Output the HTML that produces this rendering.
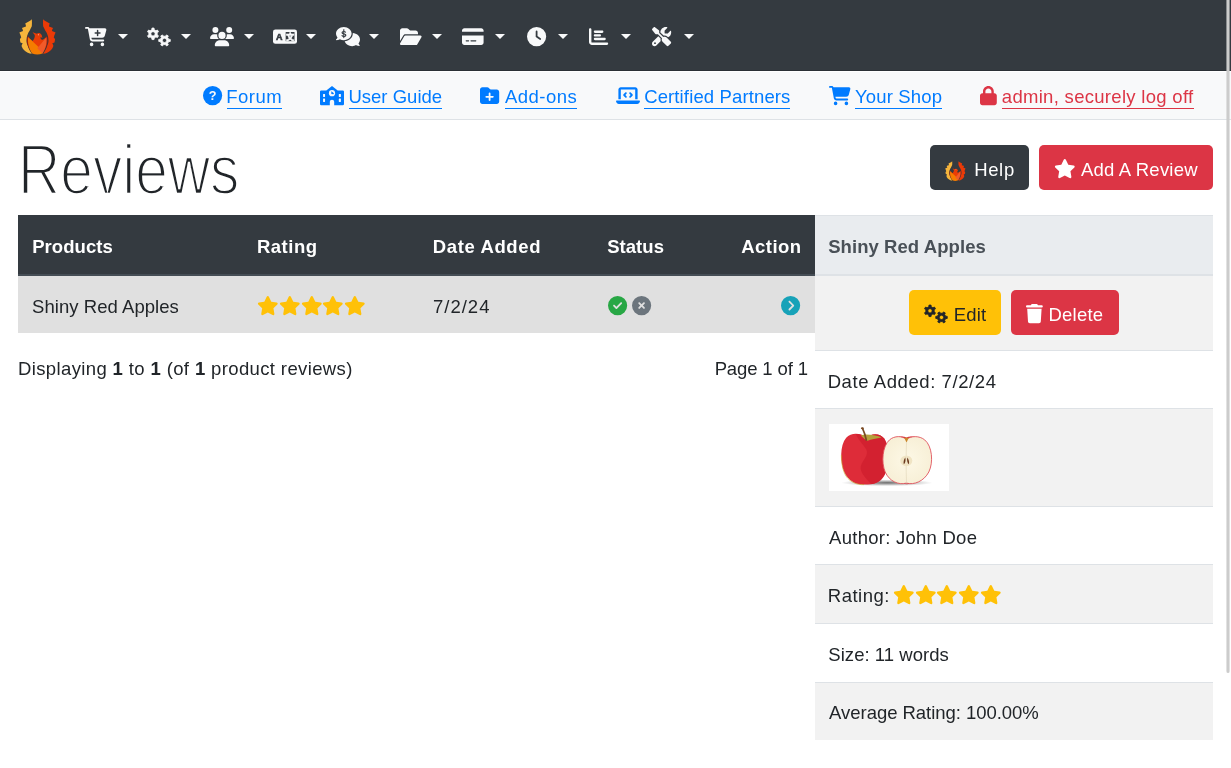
<!DOCTYPE html>
<html lang="en"><head><meta charset="utf-8"><title>Reviews</title>
<style>
html,body{margin:0;padding:0;background:#fff;}
body{width:1231px;height:768px;overflow:hidden;position:relative;font-family:"Liberation Sans",sans-serif;color:#212529;}
.b{position:absolute;box-sizing:border-box;}
.t{position:absolute;white-space:nowrap;line-height:1;text-decoration:none;}
.ul{position:absolute;height:1.2px;display:block;}
svg{position:absolute;overflow:visible;}
.caret{position:absolute;width:0;height:0;border-left:5.1px solid transparent;border-right:5.1px solid transparent;border-top:5.1px solid #f8f9fa;top:34px;}
h1{position:absolute;margin:0;font-weight:400;white-space:nowrap;line-height:1;transform-origin:0 0;}
</style></head><body>
<div id="page" style="position:absolute;left:0;top:0;width:1231px;height:768px;will-change:transform">

<div class="b" style="left:0px;top:0px;width:1231px;height:71px;background:#343a40;border-bottom:1px solid #2b3035;"></div>
<div class="b" style="left:0px;top:71px;width:1231px;height:49px;background:#f8f9fa;border-top:1px solid #fff;border-bottom:1px solid #dee2e6;"></div>
<div class="b" style="left:930px;top:145px;width:99.2px;height:45px;background:#343a40;border-radius:5px;"></div>
<div class="b" style="left:1039.3px;top:145px;width:173.5px;height:45px;background:#dc3545;border-radius:5px;"></div>
<div class="b" style="left:18px;top:215px;width:796.8px;height:60.8px;background:#343a40;"></div>
<div class="b" style="left:18px;top:274.1px;width:796.8px;height:1.7px;background:#454d55;"></div>
<div class="b" style="left:18px;top:275.8px;width:796.8px;height:57px;background:#e0e0e0;"></div>
<div class="b" style="left:814.8px;top:215px;width:398px;height:60.8px;background:#e9ecef;border-top:1px solid #dee2e6;"></div>
<div class="b" style="left:814.8px;top:274.2px;width:398px;height:1.6px;background:#dee2e6;"></div>
<div class="b" style="left:814.8px;top:275.8px;width:398px;height:74.2px;background:#f2f2f2;"></div>
<div class="b" style="left:814.8px;top:350px;width:398px;height:58px;background:#fff;border-top:1px solid #dee2e6;"></div>
<div class="b" style="left:814.8px;top:408px;width:398px;height:98px;background:#f2f2f2;border-top:1px solid #dee2e6;"></div>
<div class="b" style="left:814.8px;top:506px;width:398px;height:58px;background:#fff;border-top:1px solid #dee2e6;"></div>
<div class="b" style="left:814.8px;top:564px;width:398px;height:59px;background:#f2f2f2;border-top:1px solid #dee2e6;"></div>
<div class="b" style="left:814.8px;top:623px;width:398px;height:59px;background:#fff;border-top:1px solid #dee2e6;"></div>
<div class="b" style="left:814.8px;top:682px;width:398px;height:58px;background:#f2f2f2;border-top:1px solid #dee2e6;"></div>
<div class="b" style="left:909px;top:289.9px;width:92.1px;height:45.2px;background:#ffc107;border-radius:5px;"></div>
<div class="b" style="left:1010.8px;top:289.9px;width:108.0px;height:45.2px;background:#dc3545;border-radius:5px;"></div>
<div class="b" style="left:829px;top:424px;width:120px;height:67px;background:#fff;"></div>
<svg style="left:829px;top:424px;" width="120" height="67" viewBox="829 424 120 67" ><defs><radialGradient id="shd" cx="50%" cy="50%" r="50%"><stop offset="0" stop-color="#444" stop-opacity=".8"/><stop offset=".55" stop-color="#777" stop-opacity=".45"/><stop offset="1" stop-color="#999" stop-opacity="0"/></radialGradient><radialGradient id="half" cx="50%" cy="50%" r="55%"><stop offset="0" stop-color="#fdf8e6"/><stop offset="1" stop-color="#f7efd6"/></radialGradient></defs><ellipse cx="887" cy="482.800" rx="46" ry="3.400" fill="url(#shd)"/><path fill="#de2c39" d="M866.300 438.100C861.500 432.800 851.200 432.100 846.200 437.800C839.600 445.300 840.300 463.100 844.400 472.300C848.100 480.500 856 485.400 865.600 484.500C875.200 485.400 883 480.500 885.700 472.300C889.800 462.400 889.100 446 884.300 438.500C879.300 432.100 870.400 433.400 866.300 438.100Z"/><path fill="#cf1f2e" opacity=".8" d="M856 434C857.400 439.200 862.900 444 866.300 449.400C869 454.900 862.900 459.700 860.800 465.900C859.400 472 865.600 477.500 871.100 484C877.900 483.600 883.400 479.500 885.700 472.300C889.800 462.400 889.100 446 884.300 438.500C879.300 432.100 870.400 433.400 866.300 438.100C863.500 435.100 860.100 433.700 856 434Z"/><path fill="#b5a03a" d="M860.800 435.400C864.200 434 869.700 434.800 875.200 435.400C878.600 435.900 880.600 436.700 881.500 437.500C876.500 438.400 871.100 439.200 867.600 440.800C864.900 439.200 862.900 437.500 860.800 435.400Z"/><path fill="none" stroke="#7a4a24" stroke-width="1.700" stroke-linecap="round" d="M866.300 440 C865.500 436 864 431.500 862.600 428.600"/><ellipse cx="862.400" cy="428.300" rx="1.500" ry="1" fill="#7a4a24"/><path fill="none" stroke="#c9a02a" stroke-width=".8" opacity=".8" d="M841.400 455 C841.400 464 843 471 846 476 C850 482 857 485 864 484.600"/><path fill="url(#half)" stroke="#e0525c" stroke-width=".9" d="M906.400 439.500C902.500 435.600 894.300 435.600 889.500 439.900C882.400 446 881.100 462.400 885.200 472C889.300 481.200 898.400 485.300 906.400 483.100C914.100 485.300 924 481.200 928.800 472C933.600 462.400 932.200 446 924.700 439.900C919.600 435.600 910.700 435.600 906.400 439.500Z"/><path fill="#d8323c" d="M898 437.300 C901.500 436.500 904.800 437.600 906.400 439.600 C908 437.600 911.500 436.500 915.500 437.300 C912 436.100 909 436.300 906.400 437.400 C904 436.300 901 436.100 898 437.300 Z"/><path fill="#c9862a" d="M904.200 437.700 L908.800 437.700 L906.500 442.600 Z"/><path fill="none" stroke="#e6dcc0" stroke-width=".8" d="M906.500 442 C906 455 906 470 906.500 482.500"/><ellipse cx="906.300" cy="460.800" rx="6" ry="5.400" fill="#f0e4c4"/><path fill="#6b3a1e" d="M905.300 457.600 C903.800 459.500 903.200 462.300 903.800 464.200 C905.300 463.400 906 460.500 905.300 457.600 Z M907.300 457.600 C908.800 459.500 909.500 462.300 908.900 464.200 C907.400 463.400 906.700 460.500 907.300 457.600 Z"/><path fill="#d8323c" d="M903 483.300 C905 484.600 908.500 484.600 910.500 483.300 C908.500 484 905.500 484 903 483.300 Z"/></svg>
<h1 id="h1" style="left:18.3px;top:134.7px;font-size:70.3px;transform:scaleX(0.8335);-webkit-text-stroke:2.4px #fff;">Reviews</h1>
<a id="t_forum" class="t" style="left:226.18px;top:87.74px;font-size:18.5px;color:#007bff;font-weight:400;letter-spacing:0.509px">Forum</a>
<i class="ul" style="left:227.0px;width:55.0px;top:107.8px;background:#007bff"></i>
<a id="t_guide" class="t" style="left:348.39px;top:87.74px;font-size:18.5px;color:#007bff;font-weight:400;letter-spacing:0.019px">User Guide</a>
<i class="ul" style="left:348.9px;width:93.1px;top:107.8px;background:#007bff"></i>
<a id="t_addons" class="t" style="left:505.04px;top:87.74px;font-size:18.5px;color:#007bff;font-weight:400;letter-spacing:0.474px">Add-ons</a>
<i class="ul" style="left:504.6px;width:72.4px;top:107.8px;background:#007bff"></i>
<a id="t_cert" class="t" style="left:644.15px;top:87.74px;font-size:18.5px;color:#007bff;font-weight:400;letter-spacing:0.133px">Certified Partners</a>
<i class="ul" style="left:644.4px;width:146.1px;top:107.8px;background:#007bff"></i>
<a id="t_shop" class="t" style="left:854.89px;top:87.74px;font-size:18.5px;color:#007bff;font-weight:400;letter-spacing:0.179px">Your Shop</a>
<i class="ul" style="left:854.9px;width:87.2px;top:107.8px;background:#007bff"></i>
<a id="t_admin" class="t" style="left:1001.83px;top:87.74px;font-size:18.5px;color:#dc3545;font-weight:400;letter-spacing:0.299px">admin, securely log off</a>
<i class="ul" style="left:1001.9px;width:192.2px;top:107.8px;background:#dc3545"></i>
<a id="t_help" class="t" style="left:974.16px;top:160.74px;font-size:18.5px;color:#fff;font-weight:400;letter-spacing:0.659px">Help</a>
<a id="t_addrev" class="t" style="left:1080.89px;top:160.74px;font-size:18.5px;color:#fff;font-weight:400;letter-spacing:0.233px">Add A Review</a>
<span id="t_hprod" class="t" style="left:32.20px;top:237.74px;font-size:18.5px;color:#fff;font-weight:700;letter-spacing:0.060px">Products</span>
<span id="t_hrat" class="t" style="left:256.88px;top:237.74px;font-size:18.5px;color:#fff;font-weight:700;letter-spacing:0.536px">Rating</span>
<span id="t_hdate" class="t" style="left:432.75px;top:237.74px;font-size:18.5px;color:#fff;font-weight:700;letter-spacing:0.624px">Date Added</span>
<span id="t_hstat" class="t" style="left:607.15px;top:237.74px;font-size:18.5px;color:#fff;font-weight:700;letter-spacing:0.053px">Status</span>
<span id="t_hact" class="t" style="left:741.32px;top:237.74px;font-size:18.5px;color:#fff;font-weight:700;letter-spacing:0.420px">Action</span>
<span id="t_hright" class="t" style="left:828.15px;top:237.74px;font-size:18.5px;color:#495057;font-weight:700;letter-spacing:0.072px">Shiny Red Apples</span>
<span id="t_rprod" class="t" style="left:32.09px;top:297.74px;font-size:18.5px;color:#212529;font-weight:400;letter-spacing:0.048px">Shiny Red Apples</span>
<span id="t_rdate" class="t" style="left:433.00px;top:297.74px;font-size:18.5px;color:#212529;font-weight:400;letter-spacing:1.000px">7/2/24</span>
<span id="t_disp" class="t" style="left:18.04px;top:359.74px;font-size:18.5px;color:#212529;font-weight:400;letter-spacing:0.370px">Displaying <b>1</b> to <b>1</b> (of <b>1</b> product reviews)</span>
<span id="t_page" class="t" style="left:714.64px;top:359.74px;font-size:18.5px;color:#212529;font-weight:400;letter-spacing:-0.130px">Page 1 of 1</span>
<a id="t_edit" class="t" style="left:953.63px;top:305.74px;font-size:18.5px;color:#212529;font-weight:400;letter-spacing:0.214px">Edit</a>
<a id="t_del" class="t" style="left:1048.40px;top:305.74px;font-size:18.5px;color:#fff;font-weight:400;letter-spacing:0.246px">Delete</a>
<span id="t_pdate" class="t" style="left:827.64px;top:372.74px;font-size:18.5px;color:#212529;font-weight:400;letter-spacing:0.582px">Date Added: 7/2/24</span>
<span id="t_pauth" class="t" style="left:829.12px;top:528.74px;font-size:18.5px;color:#212529;font-weight:400;letter-spacing:0.258px">Author: John Doe</span>
<span id="t_prat" class="t" style="left:827.76px;top:586.74px;font-size:18.5px;color:#212529;font-weight:400;letter-spacing:0.517px">Rating:</span>
<span id="t_psize" class="t" style="left:828.34px;top:645.74px;font-size:18.5px;color:#212529;font-weight:400;letter-spacing:0.041px">Size: 11 words</span>
<span id="t_pavg" class="t" style="left:829.12px;top:703.74px;font-size:18.5px;color:#212529;font-weight:400;letter-spacing:-0.043px">Average Rating: 100.00%</span>
<svg style="left:18.6px;top:19.4px;" width="36.6" height="36.6" viewBox="0 0 100 100" ><path fill="#f6b53c" d="M35 1 C31 6 23 9 17 12 Q19 16 19 20.500 Q13 22 8 24.500 Q10.500 29 11 33 Q5.500 34.500 1 37 Q4.500 44 6 50.500 Q4 52.500 2.500 55 Q3 60 4 64 L10 66 Q7.500 70 7 74 C8.500 78.500 10.500 82 13.500 85 C16.500 88 20 90.500 24 92.300 C27.500 93.800 31.500 94.800 35 95 C29 87 25 79 23.500 72 C21 67 20 61 20.600 56.400 C20.600 52 21.500 48 22.500 44.800 C24 40 26.500 35 29.300 31.200 C31 27 33.500 23 35 19.600 C35.600 13 35.600 7 35 1 Z"/><path fill="#eb3a07" d="M 66 1 C 70 6 78 9 84 12 Q 82 16 82 20.5 Q 88 22 93 24.5 Q 90.5 29 90 33 Q 95.5 34.5 100 37 Q 96.5 44 95 50.5 Q 97 52.5 98.5 55 Q 98 60 97 64 L 91 66 Q 93.5 70 94 74 C 92.5 78.5 90.5 82 87.5 85 C 84.5 88 81 90.5 77 92.3 C 73.5 93.8 69.5 94.8 66 95 C 72 87 76 79 77.5 72 C 80 67 81 61 80.4 56.4 C 80.4 52 79.5 48 78.5 44.8 C 77 40 74.5 35 71.7 31.2 C 70 27 67.5 23 66 19.6 C 65.4 13 65.4 7 66 1 Z"/><path fill="#a3210c" d="M24 47 C19 58 22 76 34 88 L38 86 C28 74 25 60 28 50 Z M76 47 C81 58 78 76 66 88 L62 86 C72 74 75 60 72 50 Z"/><path fill="#e93c06" d="M37 36 L49 40 C53 37 59 38 62 44 L64 52 L59 49 C58 55 62 58 66 56 L75 50 L73 66 L50 80 L27 66 L25 50 L37 60 C41 56 44 50 43 44 Z"/><path fill="#f57c00" d="M25 50 C23 66 27 82 36 94 C45 98 55 98 64 94 L66 88 Z"/><path fill="#f15a29" d="M75 50 C77 66 73 82 64 94 L50 80 Z"/><circle cx="53" cy="43" r="1.500" fill="#f9c7b0"/></svg>
<svg style="left:85.2px;top:27.2px;" width="21.6" height="19.2" viewBox="0 0 576 512" ><path fill="#f8f9fa" fill-rule="nonzero" d="M0 24C0 10.700 10.700 0 24 0H69.500c22 0 41.500 12.800 50.600 32h411c26.300 0 45.500 25 38.600 50.400l-41 152.300c-8.500 31.400-37 53.300-69.500 53.300H170.700l5.400 28.500c2.200 11.300 12.100 19.500 23.600 19.500H488c13.300 0 24 10.700 24 24s-10.700 24-24 24H199.700c-34.600 0-64.300-24.600-70.700-58.500L77.400 54.500c-.700-3.800-4-6.500-7.900-6.500H24C10.700 48 0 37.300 0 24zM128 464a48 48 0 1 1 96 0 48 48 0 1 1 -96 0zm336-48a48 48 0 1 1 0 96 48 48 0 1 1 0-96zM252 160c0 11 9 20 20 20h44v44c0 11 9 20 20 20s20-9 20-20V180h44c11 0 20-9 20-20s-9-20-20-20H356V96c0-11-9-20-20-20s-20 9-20 20v44H272c-11 0-20 9-20 20z"/></svg>
<svg style="left:147px;top:27.2px;" width="24.0" height="19.2" viewBox="0 0 640 512" ><path fill="#f8f9fa" fill-rule="evenodd" stroke="#f8f9fa" stroke-width="22" stroke-linejoin="round" d="M192.95 72.87 L187.63 28.47 L132.37 28.47 L127.05 72.87 L81.96 98.90 L40.85 81.31 L13.22 129.16 L49.01 155.97 L49.01 208.03 L13.22 234.84 L40.85 282.69 L81.96 265.10 L127.05 291.13 L132.37 335.53 L187.63 335.53 L192.95 291.13 L238.04 265.10 L279.15 282.69 L306.78 234.84 L270.99 208.03 L270.99 155.97 L306.78 129.16 L279.15 81.31 L238.04 98.90Z M102.00 182.00a58.00 58.00 0 1 0 116.00 0a58.00 58.00 0 1 0 -116.00 0Z"/><path fill="#f8f9fa" fill-rule="evenodd" stroke="#f8f9fa" stroke-width="22" stroke-linejoin="round" d="M576.13 390.95 L620.53 385.63 L620.53 330.37 L576.13 325.05 L550.10 279.96 L567.69 238.85 L519.84 211.22 L493.03 247.01 L440.97 247.01 L414.16 211.22 L366.31 238.85 L383.90 279.96 L357.87 325.05 L313.47 330.37 L313.47 385.63 L357.87 390.95 L383.90 436.04 L366.31 477.15 L414.16 504.78 L440.97 468.99 L493.03 468.99 L519.84 504.78 L567.69 477.15 L550.10 436.04Z M409.00 358.00a58.00 58.00 0 1 0 116.00 0a58.00 58.00 0 1 0 -116.00 0Z"/></svg>
<svg style="left:209.6px;top:27.2px;" width="24.0" height="19.2" viewBox="0 0 640 512" ><path fill="#f8f9fa" fill-rule="nonzero" d="M144 0a80 80 0 1 1 0 160A80 80 0 1 1 144 0zM512 0a80 80 0 1 1 0 160A80 80 0 1 1 512 0zM0 298.700C0 239.800 47.800 192 106.700 192h42.700c15.900 0 31 3.500 44.600 9.700c-1.300 7.200-1.900 14.700-1.900 22.300c0 38.200 16.800 72.500 43.300 96c-.200 0-.400 0-.700 0H21.300C9.600 320 0 310.400 0 298.700zM405.300 320c-.200 0-.400 0-.700 0c26.600-23.500 43.300-57.800 43.300-96c0-7.600-.700-15-1.900-22.300c13.600-6.300 28.700-9.700 44.600-9.700h42.700C592.200 192 640 239.800 640 298.700c0 11.800-9.600 21.300-21.300 21.300H405.300zM224 224a96 96 0 1 1 192 0 96 96 0 1 1 -192 0zM128 485.300C128 411.700 187.700 352 261.300 352H378.700C452.300 352 512 411.700 512 485.300c0 14.700-11.900 26.700-26.700 26.700H154.700c-14.700 0-26.700-11.900-26.700-26.700z"/></svg>
<svg style="left:272.7px;top:27.2px;" width="24" height="19.2" viewBox="0 0 640 512" ><rect x="0" y="64" width="640" height="384" rx="64" fill="#f8f9fa"/><rect x="338" y="134" width="236" height="244" fill="#343a40"/><text x="166" y="340" font-family="Liberation Sans, sans-serif" font-weight="700" font-size="240" text-anchor="middle" fill="#343a40" stroke="#343a40" stroke-width="16">A</text><text x="456" y="340" font-family="Noto Sans CJK SC, WenQuanYi Zen Hei, sans-serif" font-weight="900" font-size="220" text-anchor="middle" fill="#f8f9fa" stroke="#f8f9fa" stroke-width="12">文</text></svg>
<svg style="left:335.8px;top:27.2px;" width="24" height="19.2" viewBox="0 0 640 512" ><path fill="#f8f9fa" d="M432 512c-95.600 0-176.200-54.600-200.500-129C348.900 372.900 448 288.300 448 176c0-5.200-.200-10.400-.600-15.500C555.100 167.100 640 243.200 640 336c0 38.600-14.700 74.300-39.600 103.400c3.500 9.400 8.700 17.700 14.200 24.700c4.800 6.200 9.700 11 13.300 14.300c5 4.500 7.900 11.300 5.800 17.900c-2.100 6.600-8.300 11.100-15.200 11.100c-21.800 0-43.800-5.600-62.100-12.500c-9.200-3.500-17.800-7.400-25.200-11.400C505.900 503.300 470.200 512 432 512z"/><path fill="#f8f9fa" d="M416 176c0 97.200-93.100 176-208 176c-38.200 0-73.900-8.700-104.700-23.900c-7.500 4-16 7.900-25.200 11.400C59.800 346.400 37.800 352 16 352c-6.900 0-13.100-4.500-15.200-11.100s.200-13.800 5.800-17.900c3.600-3.300 13.500-12.100 18.700-19c5.500-7 10.700-15.400 14.200-24.700C14.700 250.300 0 214.600 0 176C0 78.800 93.100 0 208 0S416 78.800 416 176z"/><rect x="196" y="54" width="24" height="246" rx="12" fill="#343a40"/><text x="208" y="272" font-family="Liberation Sans, sans-serif" font-weight="700" font-size="250" text-anchor="middle" fill="#343a40">$</text></svg>
<svg style="left:400px;top:27.2px;" width="21.6" height="19.2" viewBox="0 0 576 512" ><path fill="#f8f9fa" fill-rule="nonzero" d="M88.700 223.800L0 375.800V96C0 60.700 28.700 32 64 32H181.500c17 0 33.300 6.700 45.300 18.700l26.500 26.500c12 12 28.300 18.700 45.300 18.700H416c35.300 0 64 28.700 64 64v32H144c-22.800 0-43.800 12.100-55.300 31.800zm27.600 16.100C122.100 230 132.600 224 144 224H544c11.500 0 22 6.100 27.700 16.100s5.700 22.200-.100 32.100l-112 192C453.900 474 443.400 480 432 480H32c-11.500 0-22-6.100-27.700-16.100s-5.700-22.200 .100-32.100l112-192z"/></svg>
<svg style="left:462.3px;top:27.2px;" width="21.6" height="19.2" viewBox="0 0 576 512" ><path fill="#f8f9fa" fill-rule="nonzero" d="M64 32C28.700 32 0 60.700 0 96v32H576V96c0-35.300-28.700-64-64-64H64zM576 224H0V416c0 35.300 28.700 64 64 64H512c35.300 0 64-28.700 64-64V224zM112 352h64c8.800 0 16 7.200 16 16s-7.200 16-16 16H112c-8.800 0-16-7.200-16-16s7.200-16 16-16zm112 16c0-8.800 7.200-16 16-16H368c8.800 0 16 7.200 16 16s-7.200 16-16 16H240c-8.800 0-16-7.200-16-16z"/></svg>
<svg style="left:526.6px;top:27.2px;" width="19.2" height="19.2" viewBox="0 0 512 512" ><path fill="#f8f9fa" fill-rule="nonzero" d="M256 0a256 256 0 1 1 0 512A256 256 0 1 1 256 0zM232 120V256c0 8 4 15.500 10.700 20l96 64c11 7.400 25.900 4.400 33.300-6.700s4.400-25.900-6.700-33.300L280 243.200V120c0-13.300-10.700-24-24-24s-24 10.700-24 24z"/></svg>
<svg style="left:589.3px;top:27.2px;" width="19.2" height="19.2" viewBox="0 0 512 512" ><path fill="#f8f9fa" fill-rule="nonzero" d="M32 32c17.700 0 32 14.300 32 32V400c0 8.800 7.200 16 16 16H480c17.700 0 32 14.300 32 32s-14.300 32-32 32H80c-44.200 0-80-35.800-80-80V64C0 46.300 14.300 32 32 32zm96 96c0-17.700 14.300-32 32-32l192 0c17.700 0 32 14.300 32 32s-14.300 32-32 32l-192 0c-17.700 0-32-14.300-32-32zm32 64H288c17.700 0 32 14.300 32 32s-14.300 32-32 32H160c-17.700 0-32-14.300-32-32s14.300-32 32-32zm0 96H416c17.700 0 32 14.300 32 32s-14.300 32-32 32H160c-17.700 0-32-14.300-32-32s14.300-32 32-32z"/></svg>
<svg style="left:652.4px;top:27.2px;" width="19.2" height="19.2" viewBox="0 0 512 512" ><path fill="#f8f9fa" fill-rule="nonzero" d="M78.600 5C69.100-2.400 55.600-1.500 47 7L7 47c-8.500 8.500-9.400 22-2.100 31.600l80 104c4.500 5.900 11.600 9.400 19 9.400h54.100l109 109c-14.700 29-10 65.400 14.300 89.600l112 112c12.500 12.500 32.800 12.500 45.300 0l64-64c12.500-12.500 12.500-32.800 0-45.300l-112-112c-24.200-24.200-60.600-29-89.600-14.300l-109-109V104c0-7.500-3.500-14.500-9.400-19L78.600 5zM19.900 396.100C7.200 408.800 0 426.100 0 444.100C0 481.600 30.400 512 67.900 512c18 0 35.300-7.200 48-19.900L233.700 374.300c-7.800-20.900-9-43.600-3.600-65.100l-61.700-61.700L19.900 396.100zM512 144c0-10.500-1.100-20.700-3.200-30.500c-2.400-11.200-16.100-14.100-24.200-6l-63.900 63.900c-3 3-7.100 4.700-11.300 4.700H352c-8.800 0-16-7.200-16-16V102.600c0-4.200 1.700-8.300 4.700-11.300l63.900-63.900c8.100-8.100 5.200-21.800-6-24.200C388.700 1.100 378.500 0 368 0C288.500 0 224 64.500 224 144l0 .800 85.300 85.300c36-9.100 75.800 .500 104 28.700L429 274.500c49-23 83-72.800 83-130.500zM56 432a24 24 0 1 1 48 0 24 24 0 1 1 -48 0z"/></svg>
<i class="caret" style="left:118.1px"></i>
<i class="caret" style="left:180.9px"></i>
<i class="caret" style="left:244.1px"></i>
<i class="caret" style="left:306.1px"></i>
<i class="caret" style="left:369.1px"></i>
<i class="caret" style="left:432px"></i>
<i class="caret" style="left:494.9px"></i>
<i class="caret" style="left:557.7px"></i>
<i class="caret" style="left:620.9px"></i>
<i class="caret" style="left:683.8px"></i>
<svg style="left:202.7px;top:86.1px;" width="19.2" height="19.2" viewBox="0 0 512 512" ><circle cx="256" cy="256" r="256" fill="#007bff"/><text x="256" y="383" font-family="Liberation Sans, sans-serif" font-weight="700" font-size="340" text-anchor="middle" fill="#f8f9fa">?</text></svg>
<svg style="left:320px;top:85.8px;" width="24" height="19.2" viewBox="0 0 24 19.2" ><path fill="#007bff" d="M12 0.100 L17.700 4.400 H22.800 Q24 4.400 24 5.600 V18 Q24 19.200 22.800 19.200 H14.200 V15.800 Q14.200 13.800 12 13.800 Q9.800 13.800 9.800 15.800 V19.200 H1.200 Q0 19.200 0 18 V5.600 Q0 4.400 1.200 4.400 H6.300 Z"/><circle cx="12" cy="7.200" r="3.100" fill="#f8f9fa"/><path fill="#007bff" d="M11.300 5.300 L14 7.300 L13.300 8.300 L11.300 8 Z"/><rect x="3.050" y="7.900" width="2" height="3.100" rx=".4" fill="#f8f9fa"/><rect x="3.050" y="12.600" width="2" height="3.300" rx=".4" fill="#f8f9fa"/><rect x="18.800" y="7.900" width="2.100" height="3.100" rx=".4" fill="#f8f9fa"/><rect x="18.800" y="12.600" width="2.100" height="3.300" rx=".4" fill="#f8f9fa"/></svg>
<svg style="left:480.4px;top:86.1px;" width="19.2" height="19.2" viewBox="0 0 512 512" ><path fill="#007bff" fill-rule="nonzero" d="M512 416c0 35.300-28.700 64-64 64H64c-35.300 0-64-28.700-64-64V96C0 60.700 28.700 32 64 32H192c20.100 0 39.100 9.500 51.200 25.600l19.200 25.600c6 8.100 15.500 12.800 25.600 12.800H448c35.300 0 64 28.700 64 64V416zM232 376c0 13.300 10.700 24 24 24s24-10.700 24-24V312h64c13.300 0 24-10.700 24-24s-10.700-24-24-24H280V200c0-13.300-10.700-24-24-24s-24 10.700-24 24v64H168c-13.300 0-24 10.700-24 24s10.700 24 24 24h64v64z"/></svg>
<svg style="left:615.7px;top:86.1px;" width="24.0" height="19.2" viewBox="0 0 640 512" ><path fill="#007bff" fill-rule="nonzero" d="M64 96c0-35.300 28.700-64 64-64H512c35.300 0 64 28.700 64 64V352H512V96H128V352H64V96zM0 403.200C0 392.600 8.600 384 19.200 384H620.800c10.600 0 19.200 8.600 19.200 19.200c0 42.400-34.400 76.800-76.800 76.800H76.800C34.400 480 0 445.600 0 403.200zM281 209l-31 31 31 31c9.400 9.400 9.400 24.600 0 33.900s-24.600 9.400-33.900 0l-48-48c-9.400-9.400-9.400-24.600 0-33.900l48-48c9.400-9.400 24.600-9.400 33.900 0s9.400 24.600 0 33.900zM393 175l48 48c9.400 9.400 9.400 24.600 0 33.900l-48 48c-9.400 9.400-24.600 9.400-33.900 0s-9.400-24.600 0-33.900l31-31-31-31c-9.400-9.400-9.400-24.600 0-33.900s24.600-9.400 33.900 0z"/></svg>
<svg style="left:828.9px;top:86.1px;" width="21.6" height="19.2" viewBox="0 0 576 512" ><path fill="#007bff" fill-rule="nonzero" d="M0 24C0 10.700 10.700 0 24 0H69.500c22 0 41.500 12.800 50.600 32h411c26.300 0 45.500 25 38.600 50.400l-41 152.300c-8.500 31.400-37 53.300-69.500 53.300H170.700l5.400 28.500c2.200 11.300 12.100 19.500 23.600 19.500H488c13.300 0 24 10.700 24 24s-10.700 24-24 24H199.700c-34.600 0-64.300-24.600-70.700-58.500L77.400 54.500c-.700-3.800-4-6.500-7.900-6.500H24C10.700 48 0 37.300 0 24zM128 464a48 48 0 1 1 96 0 48 48 0 1 1 -96 0zm336-48a48 48 0 1 1 0 96 48 48 0 1 1 0-96z"/></svg>
<svg style="left:980.2px;top:86.1px;" width="16.8" height="19.2" viewBox="0 0 448 512" ><path fill="#dc3545" fill-rule="nonzero" d="M144 144v48H304V144c0-44.200-35.800-80-80-80s-80 35.800-80 80zM80 192V144C80 64.500 144.500 0 224 0s144 64.500 144 144v48h16c35.300 0 64 28.700 64 64V448c0 35.300-28.700 64-64 64H64c-35.300 0-64-28.700-64-64V256c0-35.300 28.700-64 64-64H80z"/></svg>
<svg style="left:944.7px;top:160.8px;" width="20.5" height="20.5" viewBox="0 0 100 100" ><path fill="#f6b53c" d="M35 1 C31 6 23 9 17 12 Q19 16 19 20.500 Q13 22 8 24.500 Q10.500 29 11 33 Q5.500 34.500 1 37 Q4.500 44 6 50.500 Q4 52.500 2.500 55 Q3 60 4 64 L10 66 Q7.500 70 7 74 C8.500 78.500 10.500 82 13.500 85 C16.500 88 20 90.500 24 92.300 C27.500 93.800 31.500 94.800 35 95 C29 87 25 79 23.500 72 C21 67 20 61 20.600 56.400 C20.600 52 21.500 48 22.500 44.800 C24 40 26.500 35 29.300 31.200 C31 27 33.500 23 35 19.600 C35.600 13 35.600 7 35 1 Z"/><path fill="#eb3a07" d="M 66 1 C 70 6 78 9 84 12 Q 82 16 82 20.5 Q 88 22 93 24.5 Q 90.5 29 90 33 Q 95.5 34.5 100 37 Q 96.5 44 95 50.5 Q 97 52.5 98.5 55 Q 98 60 97 64 L 91 66 Q 93.5 70 94 74 C 92.5 78.5 90.5 82 87.5 85 C 84.5 88 81 90.5 77 92.3 C 73.5 93.8 69.5 94.8 66 95 C 72 87 76 79 77.5 72 C 80 67 81 61 80.4 56.4 C 80.4 52 79.5 48 78.5 44.8 C 77 40 74.5 35 71.7 31.2 C 70 27 67.5 23 66 19.6 C 65.4 13 65.4 7 66 1 Z"/><path fill="#a3210c" d="M24 47 C19 58 22 76 34 88 L38 86 C28 74 25 60 28 50 Z M76 47 C81 58 78 76 66 88 L62 86 C72 74 75 60 72 50 Z"/><path fill="#e93c06" d="M37 36 L49 40 C53 37 59 38 62 44 L64 52 L59 49 C58 55 62 58 66 56 L75 50 L73 66 L50 80 L27 66 L25 50 L37 60 C41 56 44 50 43 44 Z"/><path fill="#f57c00" d="M25 50 C23 66 27 82 36 94 C45 98 55 98 64 94 L66 88 Z"/><path fill="#f15a29" d="M75 50 C77 66 73 82 64 94 L50 80 Z"/><circle cx="53" cy="43" r="1.500" fill="#f9c7b0"/></svg>
<svg style="left:1053.9px;top:159.0px;" width="21.6" height="19.2" viewBox="0 0 576 512" ><path fill="#fff" fill-rule="nonzero" d="M316.900 18C311.600 7 300.400 0 288.100 0s-23.400 7-28.800 18L195 150.300 51.400 171.500c-12 1.800-22 10.200-25.700 21.700s-.700 24.200 7.900 32.700L137.800 329 113.200 474.700c-2 12 3 24.200 12.900 31.300s23 8 33.800 2.300l128.300-68.500 128.300 68.500c10.800 5.700 23.900 4.900 33.800-2.300s14.900-19.300 12.900-31.300L438.500 329 542.700 225.900c8.600-8.500 11.700-21.200 7.900-32.700s-13.700-19.900-25.700-21.700L381.200 150.300 316.900 18z"/></svg>
<svg style="left:257.4px;top:296.2px;" width="21.6" height="19.2" viewBox="0 0 576 512" ><path fill="#ffc107" fill-rule="nonzero" d="M316.900 18C311.600 7 300.400 0 288.100 0s-23.400 7-28.800 18L195 150.300 51.400 171.500c-12 1.800-22 10.200-25.700 21.700s-.700 24.200 7.900 32.700L137.800 329 113.200 474.700c-2 12 3 24.200 12.900 31.300s23 8 33.800 2.300l128.300-68.500 128.300 68.500c10.800 5.700 23.900 4.900 33.800-2.300s14.900-19.300 12.900-31.300L438.500 329 542.700 225.900c8.600-8.500 11.700-21.200 7.900-32.700s-13.700-19.900-25.700-21.700L381.200 150.300 316.900 18z"/></svg><svg style="left:279.0px;top:296.2px;" width="21.6" height="19.2" viewBox="0 0 576 512" ><path fill="#ffc107" fill-rule="nonzero" d="M316.900 18C311.600 7 300.400 0 288.100 0s-23.400 7-28.800 18L195 150.300 51.400 171.500c-12 1.800-22 10.200-25.700 21.700s-.700 24.200 7.900 32.700L137.800 329 113.200 474.700c-2 12 3 24.200 12.900 31.300s23 8 33.800 2.300l128.300-68.500 128.300 68.500c10.800 5.700 23.900 4.900 33.800-2.300s14.900-19.300 12.900-31.300L438.500 329 542.700 225.900c8.600-8.500 11.700-21.200 7.900-32.700s-13.700-19.900-25.700-21.700L381.200 150.300 316.900 18z"/></svg><svg style="left:300.6px;top:296.2px;" width="21.6" height="19.2" viewBox="0 0 576 512" ><path fill="#ffc107" fill-rule="nonzero" d="M316.900 18C311.600 7 300.400 0 288.100 0s-23.400 7-28.800 18L195 150.300 51.400 171.500c-12 1.800-22 10.200-25.700 21.700s-.700 24.200 7.900 32.700L137.800 329 113.200 474.700c-2 12 3 24.200 12.900 31.300s23 8 33.800 2.300l128.300-68.500 128.300 68.500c10.800 5.700 23.900 4.900 33.800-2.300s14.900-19.300 12.900-31.300L438.500 329 542.700 225.900c8.600-8.500 11.700-21.200 7.900-32.700s-13.700-19.900-25.700-21.700L381.200 150.300 316.900 18z"/></svg><svg style="left:322.2px;top:296.2px;" width="21.6" height="19.2" viewBox="0 0 576 512" ><path fill="#ffc107" fill-rule="nonzero" d="M316.900 18C311.600 7 300.400 0 288.100 0s-23.400 7-28.800 18L195 150.300 51.400 171.500c-12 1.800-22 10.200-25.700 21.700s-.700 24.200 7.900 32.700L137.800 329 113.200 474.700c-2 12 3 24.200 12.900 31.300s23 8 33.800 2.300l128.300-68.500 128.300 68.500c10.800 5.700 23.900 4.900 33.800-2.300s14.900-19.300 12.900-31.300L438.500 329 542.700 225.900c8.600-8.500 11.700-21.200 7.900-32.700s-13.700-19.900-25.700-21.700L381.200 150.300 316.900 18z"/></svg><svg style="left:343.8px;top:296.2px;" width="21.6" height="19.2" viewBox="0 0 576 512" ><path fill="#ffc107" fill-rule="nonzero" d="M316.900 18C311.600 7 300.400 0 288.100 0s-23.400 7-28.800 18L195 150.300 51.400 171.500c-12 1.800-22 10.200-25.700 21.700s-.700 24.200 7.900 32.700L137.800 329 113.200 474.700c-2 12 3 24.200 12.900 31.300s23 8 33.800 2.300l128.300-68.500 128.300 68.500c10.800 5.700 23.900 4.900 33.800-2.300s14.900-19.300 12.900-31.300L438.500 329 542.700 225.900c8.600-8.500 11.700-21.200 7.900-32.700s-13.700-19.900-25.700-21.700L381.200 150.300 316.900 18z"/></svg>
<svg style="left:607.7px;top:296.2px;" width="19.2" height="19.2" viewBox="0 0 512 512" ><path fill="#28a745" fill-rule="nonzero" d="M256 512A256 256 0 1 0 256 0a256 256 0 1 0 0 512zM369 209L241 337c-9.400 9.400-24.600 9.400-33.900 0l-64-64c-9.400-9.400-9.400-24.600 0-33.900s24.600-9.400 33.900 0l47 47L335 175c9.400-9.400 24.600-9.400 33.900 0s9.400 24.600 0 33.900z"/></svg>
<svg style="left:632.1px;top:296.2px;" width="19.2" height="19.2" viewBox="0 0 512 512" ><path fill="#6c757d" fill-rule="nonzero" d="M256 512A256 256 0 1 0 256 0a256 256 0 1 0 0 512zM175 175c9.400-9.400 24.600-9.400 33.900 0l47 47 47-47c9.400-9.400 24.600-9.400 33.900 0s9.400 24.600 0 33.900l-47 47 47 47c9.400 9.400 9.400 24.600 0 33.900s-24.600 9.400-33.900 0l-47-47-47 47c-9.400 9.400-24.600 9.400-33.900 0s-9.400-24.600 0-33.900l47-47-47-47c-9.400-9.400-9.400-24.600 0-33.900z"/></svg>
<svg style="left:780.85px;top:296.2px;" width="19.2" height="19.2" viewBox="0 0 512 512" ><path fill="#17a2b8" fill-rule="nonzero" d="M0 256a256 256 0 1 0 512 0A256 256 0 1 0 0 256zM241 377c-9.400 9.400-24.600 9.400-33.900 0s-9.400-24.600 0-33.900l87-87-87-87c-9.400-9.400-9.400-24.600 0-33.900s24.600-9.400 33.900 0L345 239c9.400 9.400 9.400 24.600 0 33.900L241 377z"/></svg>
<svg style="left:924.4px;top:304.3px;" width="24.0" height="19.2" viewBox="0 0 640 512" ><path fill="#212529" fill-rule="evenodd" stroke="#212529" stroke-width="22" stroke-linejoin="round" d="M192.95 72.87 L187.63 28.47 L132.37 28.47 L127.05 72.87 L81.96 98.90 L40.85 81.31 L13.22 129.16 L49.01 155.97 L49.01 208.03 L13.22 234.84 L40.85 282.69 L81.96 265.10 L127.05 291.13 L132.37 335.53 L187.63 335.53 L192.95 291.13 L238.04 265.10 L279.15 282.69 L306.78 234.84 L270.99 208.03 L270.99 155.97 L306.78 129.16 L279.15 81.31 L238.04 98.90Z M102.00 182.00a58.00 58.00 0 1 0 116.00 0a58.00 58.00 0 1 0 -116.00 0Z"/><path fill="#212529" fill-rule="evenodd" stroke="#212529" stroke-width="22" stroke-linejoin="round" d="M576.13 390.95 L620.53 385.63 L620.53 330.37 L576.13 325.05 L550.10 279.96 L567.69 238.85 L519.84 211.22 L493.03 247.01 L440.97 247.01 L414.16 211.22 L366.31 238.85 L383.90 279.96 L357.87 325.05 L313.47 330.37 L313.47 385.63 L357.87 390.95 L383.90 436.04 L366.31 477.15 L414.16 504.78 L440.97 468.99 L493.03 468.99 L519.84 504.78 L567.69 477.15 L550.10 436.04Z M409.00 358.00a58.00 58.00 0 1 0 116.00 0a58.00 58.00 0 1 0 -116.00 0Z"/></svg>
<svg style="left:1026.2px;top:304.3px;" width="16.8" height="19.2" viewBox="0 0 448 512" ><path fill="#fff" fill-rule="nonzero" d="M135.200 17.700L128 32H32C14.300 32 0 46.300 0 64S14.300 96 32 96H416c17.700 0 32-14.300 32-32s-14.300-32-32-32H320l-7.200-14.300C307.400 6.800 296.300 0 284.200 0H163.800c-12.100 0-23.200 6.800-28.600 17.700zM416 128H32L53.200 467c1.600 25.300 22.600 45 47.900 45H346.900c25.300 0 46.300-19.700 47.900-45L416 128z"/></svg>
<svg style="left:893.1px;top:585.1px;" width="21.6" height="19.2" viewBox="0 0 576 512" ><path fill="#ffc107" fill-rule="nonzero" d="M316.900 18C311.600 7 300.400 0 288.100 0s-23.400 7-28.800 18L195 150.300 51.400 171.500c-12 1.800-22 10.200-25.700 21.700s-.700 24.200 7.900 32.700L137.800 329 113.200 474.700c-2 12 3 24.200 12.900 31.300s23 8 33.800 2.300l128.300-68.500 128.300 68.500c10.800 5.700 23.900 4.900 33.800-2.300s14.900-19.300 12.900-31.300L438.500 329 542.700 225.900c8.600-8.500 11.700-21.200 7.900-32.700s-13.700-19.900-25.700-21.700L381.200 150.300 316.900 18z"/></svg><svg style="left:914.7px;top:585.1px;" width="21.6" height="19.2" viewBox="0 0 576 512" ><path fill="#ffc107" fill-rule="nonzero" d="M316.900 18C311.600 7 300.400 0 288.100 0s-23.400 7-28.800 18L195 150.300 51.400 171.500c-12 1.800-22 10.200-25.700 21.700s-.700 24.200 7.900 32.700L137.800 329 113.200 474.700c-2 12 3 24.200 12.900 31.300s23 8 33.800 2.300l128.300-68.500 128.300 68.500c10.800 5.700 23.900 4.900 33.800-2.300s14.900-19.300 12.900-31.300L438.500 329 542.700 225.900c8.600-8.500 11.700-21.200 7.900-32.700s-13.700-19.900-25.700-21.700L381.200 150.300 316.900 18z"/></svg><svg style="left:936.3px;top:585.1px;" width="21.6" height="19.2" viewBox="0 0 576 512" ><path fill="#ffc107" fill-rule="nonzero" d="M316.900 18C311.600 7 300.400 0 288.100 0s-23.400 7-28.800 18L195 150.300 51.400 171.500c-12 1.800-22 10.200-25.700 21.700s-.700 24.200 7.900 32.700L137.800 329 113.200 474.700c-2 12 3 24.200 12.900 31.300s23 8 33.800 2.300l128.300-68.500 128.300 68.500c10.800 5.700 23.900 4.900 33.800-2.300s14.900-19.300 12.900-31.300L438.500 329 542.700 225.900c8.600-8.500 11.700-21.200 7.900-32.700s-13.700-19.900-25.700-21.700L381.200 150.300 316.900 18z"/></svg><svg style="left:957.9px;top:585.1px;" width="21.6" height="19.2" viewBox="0 0 576 512" ><path fill="#ffc107" fill-rule="nonzero" d="M316.900 18C311.600 7 300.400 0 288.100 0s-23.400 7-28.800 18L195 150.300 51.400 171.500c-12 1.800-22 10.200-25.700 21.700s-.700 24.200 7.900 32.700L137.800 329 113.200 474.700c-2 12 3 24.200 12.900 31.300s23 8 33.800 2.300l128.300-68.500 128.300 68.500c10.800 5.700 23.900 4.900 33.800-2.300s14.900-19.300 12.900-31.300L438.500 329 542.700 225.900c8.600-8.500 11.700-21.200 7.900-32.700s-13.700-19.900-25.700-21.700L381.200 150.300 316.900 18z"/></svg><svg style="left:979.5px;top:585.1px;" width="21.6" height="19.2" viewBox="0 0 576 512" ><path fill="#ffc107" fill-rule="nonzero" d="M316.900 18C311.600 7 300.400 0 288.100 0s-23.400 7-28.800 18L195 150.300 51.400 171.500c-12 1.800-22 10.200-25.700 21.700s-.700 24.200 7.900 32.700L137.800 329 113.200 474.700c-2 12 3 24.200 12.900 31.300s23 8 33.800 2.300l128.300-68.500 128.300 68.500c10.800 5.700 23.900 4.900 33.800-2.300s14.900-19.300 12.900-31.300L438.500 329 542.700 225.900c8.600-8.500 11.700-21.200 7.900-32.700s-13.700-19.900-25.700-21.700L381.200 150.300 316.900 18z"/></svg>
<div class="b" style="left:1226px;top:0px;width:4px;height:672.8px;background:linear-gradient(90deg,rgba(204,204,204,0) 0,#cccccc 22%,#cccccc 78%,rgba(204,204,204,0) 100%);border-radius:0 0 2px 2px;"></div>
</div></body></html>
